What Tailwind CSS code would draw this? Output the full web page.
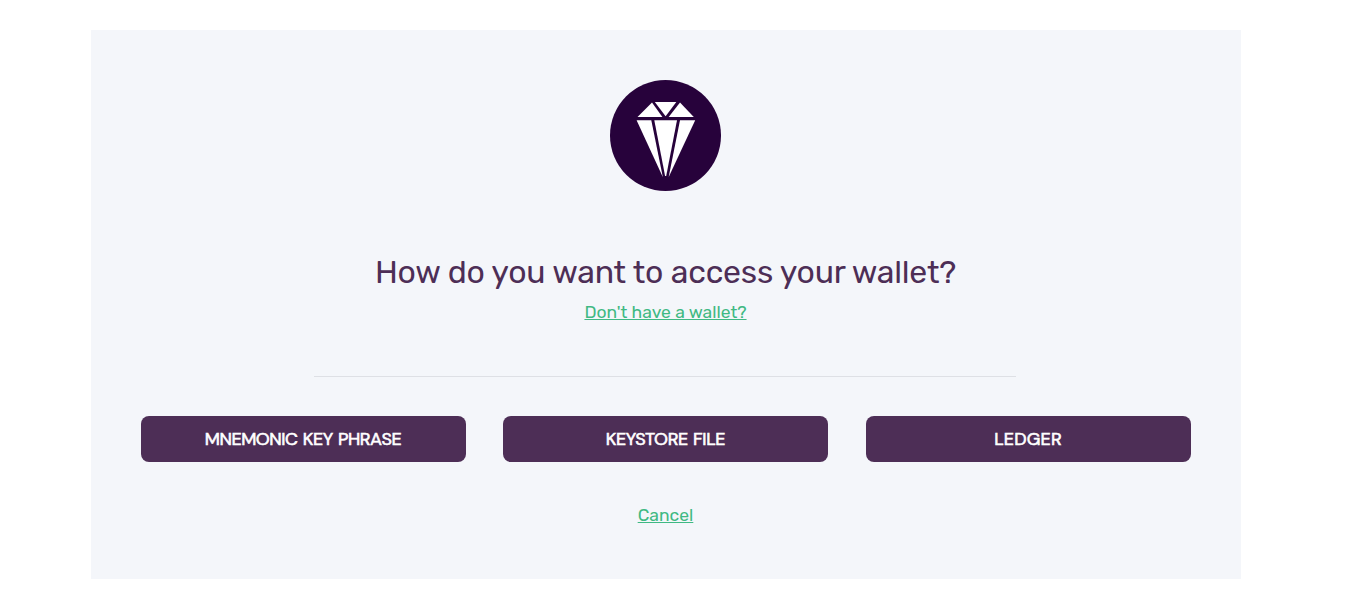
<!DOCTYPE html>
<html lang="en">
<head>
    <meta charset="UTF-8">
    <meta name="viewport" content="width=device-width, initial-scale=1.0">
    <title>Access Wallet</title>
    <script src="https://cdn.jsdelivr.net/npm/@tailwindcss/browser@4"></script>
</head>
<body class="bg-white font-['Rubik','Roboto',sans-serif]">
    <main class="ml-[90.5px] mt-[30px] w-[1150px] h-[549px] bg-[#f4f6fa] px-[50px] pt-[50px] flex flex-col items-center">
        <svg class="w-[111px] h-[111px]" viewBox="0 0 111 111" aria-hidden="true">
            <circle cx="55.5" cy="55.5" r="55.5" fill="#27023b"/>
            <g fill="#fff">
                <path d="M44.8 22H66.3L55.6 36.2Z"/>
                <path d="M42 22.6L52.4 37H27.5Z"/>
                <path d="M70 22.6L83.8 37H58.7Z"/>
                <path d="M26.6 40.2H41.3L52.8 97Z"/>
                <path d="M44.3 40.2H67L56.2 96H55.1Z"/>
                <path d="M70 40.2H85.2L58.7 97Z"/>
            </g>
        </svg>
        <h1 class="mt-[61px] text-[32px] leading-[40px] tracking-[-0.23px] text-[#4d2e56] whitespace-nowrap">How do you want to access your wallet?</h1>
        <a href="#" class="mt-2 text-[17.5px] leading-6 text-[#3fb983] underline whitespace-nowrap">Don't have a wallet?</a>
        <hr class="mt-[52px] w-[702px] mr-[1px] border-t border-[#dee0e5]">
        <div class="mt-[39px] w-full grid grid-cols-3 gap-[37.5px] font-['DM_Sans','Inter',sans-serif]">
            <button class="h-[46px] rounded-lg bg-[#4d2e56] text-white text-[18px] [-webkit-text-stroke:0.6px_white] tracking-[-0.45px] [word-spacing:1px]">MNEMONIC KEY PHRASE</button>
            <button class="h-[46px] rounded-lg bg-[#4d2e56] text-white text-[18px] [-webkit-text-stroke:0.6px_white] tracking-[-0.35px] [word-spacing:0.8px]">KEYSTORE FILE</button>
            <button class="h-[46px] rounded-lg bg-[#4d2e56] text-white text-[18px] [-webkit-text-stroke:0.6px_white] tracking-[0.2px]">LEDGER</button>
        </div>
        <a href="#" class="mt-[41px] text-[17.5px] leading-6 text-[#3fb983] underline">Cancel</a>
    </main>
</body>
</html>
